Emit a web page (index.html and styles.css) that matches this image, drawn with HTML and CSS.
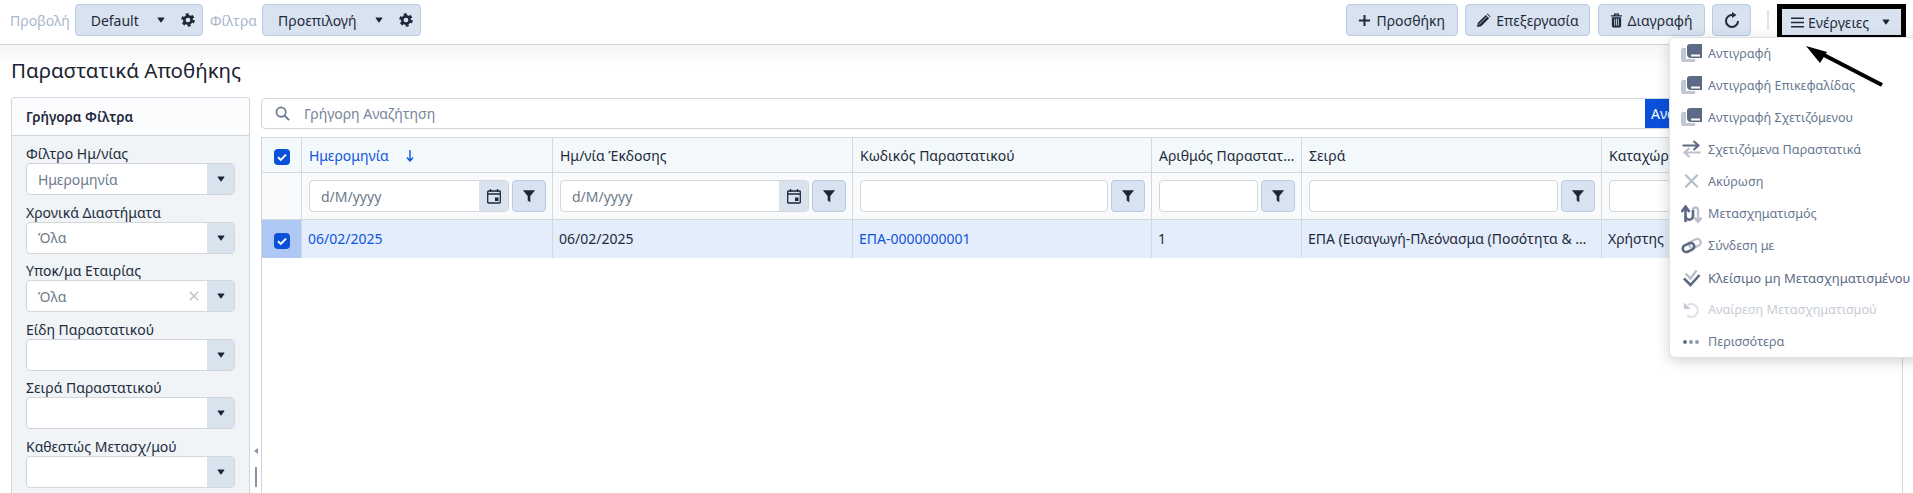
FILE: index.html
```html
<!DOCTYPE html>
<html lang="el">
<head>
<meta charset="utf-8">
<title>Παραστατικά Αποθήκης</title>
<link rel="stylesheet" href="styles.css">
</head>
<body>
<svg class="defs" width="0" height="0" aria-hidden="true">
  <defs>
    <symbol id="i-gear" viewBox="0 0 16 16">
      <circle cx="8" cy="8" r="4.200" fill="none" stroke="currentColor" stroke-width="3"/>
      <circle cx="8" cy="8" r="6.400" fill="none" stroke="currentColor" stroke-width="2.600" stroke-dasharray="3.400 3.300"/>
    </symbol>
    <symbol id="i-caret" viewBox="0 0 10 8">
      <path d="M1 .5h8a.6.6 0 0 1 .4 1L5.400 7.300a.6.6 0 0 1-.8 0L.6 1.500A.6.6 0 0 1 1 .5z" fill="currentColor"/>
    </symbol>
    <symbol id="i-funnel" viewBox="0 0 16 16">
      <path d="M1 1.500h14L9.500 8v7l-3-2V8z" fill="currentColor"/>
    </symbol>
    <symbol id="i-cal" viewBox="0 0 14 16">
      <path d="M1.500 3h11a.8.800 0 0 1 .8.800v10.400a.8.800 0 0 1-.8.800h-11a.8.800 0 0 1-.8-.8V3.800a.8.800 0 0 1 .8-.8z" fill="none" stroke="currentColor" stroke-width="1.300"/>
      <path d="M3.500 1v3M10.500 1v3M1 6h12" stroke="currentColor" stroke-width="1.300" fill="none"/>
      <rect x="8" y="9.500" width="3.500" height="3.500" fill="currentColor"/>
    </symbol>
    <symbol id="i-check" viewBox="0 0 16 16">
      <path d="M4 8.200l2.800 2.700L12 5.600" fill="none" stroke="#fff" stroke-width="2"/>
    </symbol>
    <symbol id="i-books" viewBox="0 0 21 18">
      <path d="M2 4h3v11h9v3H2a2 2 0 0 1-2-2V6a2 2 0 0 1 2-2z" fill="currentColor" opacity=".38"/>
      <path d="M9 0H21V14H10a4 4 0 0 1-4-4V3a3 3 0 0 1 3-3zM10 10.500h9v2h-9z" fill="currentColor" fill-rule="evenodd"/>
    </symbol>
    <symbol id="i-swap" viewBox="0 0 20 18">
      <path d="M1 5.500h16M12 1l5 4.500-5 4.500" fill="none" stroke="currentColor" stroke-width="2"/>
      <path d="M19 12.500H3M8 8l-5 4.500 5 4.500" fill="none" stroke="currentColor" stroke-width="2" opacity=".42"/>
    </symbol>
    <symbol id="i-x" viewBox="0 0 16 16">
      <path d="M2.500 2.500l11 11M13.500 2.500l-11 11" fill="none" stroke="currentColor" stroke-width="2"/>
    </symbol>
    <symbol id="i-transform" viewBox="0 0 21 18">
      <path d="M4.500 17V3M0.500 7L4.500 1.500 8.500 7" fill="none" stroke="currentColor" stroke-width="2.600"/>
      <path d="M4.500 11a3.750 3.750 0 0 0 7.500 0V5" fill="none" stroke="currentColor" stroke-width="2.600"/>
      <path d="M12 5a2.500 2.500 0 0 1 5 0v11M13.500 12.500L17 17l3.500-4.500" fill="none" stroke="currentColor" stroke-width="2.400" opacity=".42"/>
    </symbol>
    <symbol id="i-link" viewBox="0 0 21 18">
      <rect x="8" y="3" width="12" height="7" rx="3.500" transform="rotate(-25 14 6.500)" fill="none" stroke="currentColor" stroke-width="2.200" opacity=".42"/>
      <rect x="1.500" y="7" width="12" height="7" rx="3.500" transform="rotate(-25 7.500 10.500)" fill="none" stroke="currentColor" stroke-width="2.600"/>
    </symbol>
    <symbol id="i-closecheck" viewBox="0 0 18 18">
      <path d="M3 4.500l5 5 6-8" fill="none" stroke="currentColor" stroke-width="2.200" opacity=".45"/>
      <path d="M1.500 9.500L8 16 17 6" fill="none" stroke="currentColor" stroke-width="2.600"/>
    </symbol>
    <symbol id="i-undo" viewBox="0 0 20 20">
      <path d="M1.500 1.500l7.500 7.500H1.500z" fill="currentColor"/>
      <path d="M6 4.500a7.200 7.200 0 1 1 -1 11.500" fill="none" stroke="currentColor" stroke-width="2.400" opacity=".6"/>
    </symbol>
    <symbol id="i-dots" viewBox="0 0 21 18">
      <circle cx="4" cy="9" r="1.900" fill="currentColor"/>
      <circle cx="10" cy="9" r="1.900" fill="currentColor" opacity=".7"/>
      <circle cx="16" cy="9" r="1.900" fill="currentColor" opacity=".7"/>
    </symbol>
  </defs>
</svg>

<div class="app">
  <header class="topbar">
    <div class="bar-group">
      <span class="bar-label">Προβολή</span>
      <div class="view-btn view-default">
        <span class="view-name">Default</span>
        <svg class="caret"><use href="#i-caret"/></svg>
        <svg class="gear"><use href="#i-gear"/></svg>
      </div>
      <span class="bar-label bar-label-filter">Φίλτρα</span>
      <div class="view-btn view-filter">
        <span class="view-name">Προεπιλογή</span>
        <svg class="caret"><use href="#i-caret"/></svg>
        <svg class="gear"><use href="#i-gear"/></svg>
      </div>
    </div>
    <div class="bar-group bar-actions">
      <button class="tool-btn btn-add">
        <svg class="tool-ico" viewBox="0 0 14 14"><path d="M7 1v12M1 7h12" fill="none" stroke="currentColor" stroke-width="2.200"/></svg>
        Προσθήκη
      </button>
      <button class="tool-btn btn-edit">
        <svg class="tool-ico edit-ico" viewBox="0 0 16 16"><path d="M1 15l1-4.500 8.500-8.500 3.500 3.500L5.500 14zM11.500 1l.8-.500 3.200 3.200-.5.800z" fill="currentColor"/><path d="M3 12.500l9-9" stroke="#d9e3f0" stroke-width=".8"/></svg>
        Επεξεργασία
      </button>
      <button class="tool-btn btn-del">
        <svg class="tool-ico del-ico" viewBox="0 0 14 16"><path d="M1 3h12M5 3V1.200h4V3" fill="none" stroke="currentColor" stroke-width="1.400"/><path d="M2 4.500h10V14a1.500 1.500 0 0 1-1.500 1.500h-7A1.500 1.500 0 0 1 2 14z" fill="currentColor"/><path d="M5 6v7.500M7 6v7.500M9 6v7.500" stroke="#d9e3f0" stroke-width=".9"/></svg>
        Διαγραφή
      </button>
      <button class="tool-btn btn-refresh">
        <svg class="tool-ico refresh-ico" viewBox="0 0 16 16"><path d="M8.500 3A6 6 0 1 0 14 9" fill="none" stroke="currentColor" stroke-width="2"/><path d="M8 0v6l4.500-3z" fill="currentColor"/></svg>
      </button>
      <span class="bar-sep"></span>
      <button class="tool-btn btn-actions">
        <svg class="tool-ico" viewBox="0 0 14 12"><path d="M0 1.500h14M0 6h14M0 10.500h14" fill="none" stroke="currentColor" stroke-width="1.700"/></svg>
        Ενέργειες
        <svg class="caret caret-actions"><use href="#i-caret"/></svg>
      </button>
    </div>
  </header>

  <div class="content">
    <h1 class="page-title">Παραστατικά Αποθήκης</h1>
    <div class="workspace">
      <aside class="filters">
        <div class="filters-head">Γρήγορα Φίλτρα</div>
        <div class="filters-body">
          <div class="field">
            <label class="field-label">Φίλτρο Ημ/νίας</label>
            <div class="select"><span class="select-val">Ημερομηνία</span><span class="select-arrow"><svg class="caret"><use href="#i-caret"/></svg></span></div>
          </div>
          <div class="field">
            <label class="field-label">Χρονικά Διαστήματα</label>
            <div class="select"><span class="select-val">Όλα</span><span class="select-arrow"><svg class="caret"><use href="#i-caret"/></svg></span></div>
          </div>
          <div class="field">
            <label class="field-label">Υποκ/μα Εταιρίας</label>
            <div class="select"><span class="select-val">Όλα</span><svg class="select-clear"><use href="#i-x"/></svg><span class="select-arrow"><svg class="caret"><use href="#i-caret"/></svg></span></div>
          </div>
          <div class="field">
            <label class="field-label">Είδη Παραστατικού</label>
            <div class="select"><span class="select-val"></span><span class="select-arrow"><svg class="caret"><use href="#i-caret"/></svg></span></div>
          </div>
          <div class="field">
            <label class="field-label">Σειρά Παραστατικού</label>
            <div class="select"><span class="select-val"></span><span class="select-arrow"><svg class="caret"><use href="#i-caret"/></svg></span></div>
          </div>
          <div class="field">
            <label class="field-label">Καθεστώς Μετασχ/μού</label>
            <div class="select"><span class="select-val"></span><span class="select-arrow"><svg class="caret"><use href="#i-caret"/></svg></span></div>
          </div>
        </div>
      </aside>

      <div class="splitter">
        <span class="split-arrow"></span>
        <span class="split-bar"></span>
      </div>

      <main class="main">
        <div class="search">
          <svg class="search-ico" viewBox="0 0 16 16"><circle cx="6.500" cy="6.500" r="5" fill="none" stroke="currentColor" stroke-width="1.800"/><path d="M10.200 10.200L15 15" stroke="currentColor" stroke-width="2"/></svg>
          <span class="search-text">Γρήγορη Αναζήτηση</span>
          <span class="search-btn">Αναζήτηση</span>
        </div>
        <div class="grid">
          <table class="table">
            <colgroup>
              <col class="c0"><col class="c1"><col class="c2"><col class="c3"><col class="c4"><col class="c5"><col class="c6">
            </colgroup>
            <thead>
              <tr class="head-row">
                <th class="cb-cell"><span class="cb"><svg><use href="#i-check"/></svg></span></th>
                <th class="th-sorted">Ημερομηνία<svg class="sort-ico" viewBox="0 0 8 12"><path d="M4 0v10.500M1 7.500L4 11l3-3.500" fill="none" stroke="currentColor" stroke-width="1.400"/></svg></th>
                <th>Ημ/νία Έκδοσης</th>
                <th>Κωδικός Παραστατικού</th>
                <th>Αριθμός Παραστατικού</th>
                <th>Σειρά</th>
                <th>Καταχώρηση από</th>
              </tr>
              <tr class="filter-row">
                <td class="cb-cell"></td>
                <td><div class="cf"><div class="cf-input"><span class="cf-text">d/M/yyyy</span><span class="cf-cal"><svg><use href="#i-cal"/></svg></span></div><span class="cf-btn"><svg><use href="#i-funnel"/></svg></span></div></td>
                <td><div class="cf"><div class="cf-input"><span class="cf-text">d/M/yyyy</span><span class="cf-cal"><svg><use href="#i-cal"/></svg></span></div><span class="cf-btn"><svg><use href="#i-funnel"/></svg></span></div></td>
                <td><div class="cf"><div class="cf-input"></div><span class="cf-btn"><svg><use href="#i-funnel"/></svg></span></div></td>
                <td><div class="cf"><div class="cf-input"></div><span class="cf-btn"><svg><use href="#i-funnel"/></svg></span></div></td>
                <td><div class="cf"><div class="cf-input"></div><span class="cf-btn"><svg><use href="#i-funnel"/></svg></span></div></td>
                <td><div class="cf"><div class="cf-input"></div><span class="cf-btn"><svg><use href="#i-funnel"/></svg></span></div></td>
              </tr>
            </thead>
            <tbody>
              <tr class="data-row">
                <td class="cb-cell cb-cell-on"><span class="cb"><svg><use href="#i-check"/></svg></span></td>
                <td class="link">06/02/2025</td>
                <td>06/02/2025</td>
                <td class="link">ΕΠΑ-0000000001</td>
                <td>1</td>
                <td>ΕΠΑ (Εισαγωγή-Πλεόνασμα (Ποσότητα &amp; Αξία))</td>
                <td>Χρήστης</td>
              </tr>
            </tbody>
          </table>
        </div>
      </main>
    </div>
  </div>

  <ul class="menu">
    <li class="menu-item"><svg class="menu-ico"><use href="#i-books"/></svg>Αντιγραφή</li>
    <li class="menu-item"><svg class="menu-ico"><use href="#i-books"/></svg>Αντιγραφή Επικεφαλίδας</li>
    <li class="menu-item"><svg class="menu-ico"><use href="#i-books"/></svg>Αντιγραφή Σχετιζόμενου</li>
    <li class="menu-item"><svg class="menu-ico"><use href="#i-swap"/></svg>Σχετιζόμενα Παραστατικά</li>
    <li class="menu-item"><svg class="menu-ico menu-ico-x"><use href="#i-x"/></svg>Ακύρωση</li>
    <li class="menu-item"><svg class="menu-ico"><use href="#i-transform"/></svg>Μετασχηματισμός</li>
    <li class="menu-item"><svg class="menu-ico"><use href="#i-link"/></svg>Σύνδεση με</li>
    <li class="menu-item menu-item-strong"><svg class="menu-ico"><use href="#i-closecheck"/></svg>Κλείσιμο μη Μετασχηματισμένου</li>
    <li class="menu-item menu-item-off"><svg class="menu-ico"><use href="#i-undo"/></svg>Αναίρεση Μετασχηματισμού</li>
    <li class="menu-item"><svg class="menu-ico"><use href="#i-dots"/></svg>Περισσότερα</li>
  </ul>

  <svg class="pointer" viewBox="0 0 90 50" aria-hidden="true">
    <path d="M76 39L16 8" stroke="#000" stroke-width="4" fill="none"/>
    <path d="M0 0L14 17 21 6z" fill="#000"/>
  </svg>
</div>
</body>
</html>
```

FILE: styles.css
```css
* { box-sizing: border-box; }
html, body { margin: 0; height: 100%; overflow: hidden; background: #fff; }
body { font-family: "Noto Sans", sans-serif; font-size: 14px; color: #1f2a3c; }
.defs { position: absolute; }

.app { position: relative; height: 100vh; display: flex; flex-direction: column; overflow: hidden; }

/* top toolbar */
.topbar { flex: none; height: 45px; border-bottom: 1px solid #d4d7da; display: flex; justify-content: space-between; align-items: flex-start; padding: 4px 12px 0 10px; background: #fff; }
.bar-group { display: flex; align-items: center; height: 32px; }
.bar-label { color: #a8b8cb; font-size: 14px; }
.bar-label-filter { margin-left: 7px; }
.view-btn { height: 32px; display: flex; align-items: center; background: #d9e3f0; border: 1px solid #b7cbe6; border-radius: 4px; margin-left: 5px; }
.view-default { width: 128px; padding-left: 15px; }
.view-filter { width: 159px; padding-left: 15px; }
.view-name { flex: 1; }
.caret { width: 8px; height: 6px; color: #1b2738; flex: none; }
.gear { width: 14px; height: 14px; color: #1b2738; margin: 0 7px 0 16px; flex: none; }

.bar-actions { gap: 7.500px; }
.tool-btn { font: inherit; color: #1f2a3c; height: 32px; background: #d9e3f0; border: 1px solid #b7cbe6; border-radius: 4px; display: flex; align-items: center; justify-content: center; gap: 5px; padding: 0; white-space: nowrap; }
.tool-ico { width: 13px; height: 13px; flex: none; }
.edit-ico { width: 15px; height: 15px; }
.del-ico { width: 13px; height: 15px; }
.btn-add { width: 111.500px; }
.btn-edit { width: 125px; }
.btn-del { width: 107px; }
.btn-refresh { width: 39px; }
.refresh-ico { width: 16px; height: 16px; }
.bar-sep { width: 2px; height: 20px; background: #e1e5ea; margin: 0 6px 0 8px; }
.btn-actions { width: 119px; height: 26px; align-self: flex-start; margin-top: 5px; padding-right: 2px; outline: 5px solid #000; border: 0; border-radius: 0; gap: 4px; }
.caret-actions { margin-left: 9px; }

/* content */
.content { flex: 1; min-height: 0; display: flex; flex-direction: column; padding: 0 10px 0 11px; background: linear-gradient(#f5f6f7, #fff 22px); }
.page-title { margin: 0; height: 52px; padding-top: 7px; font-size: 20.500px; line-height: 36px; font-weight: 400; color: #1c2433; }
.workspace { flex: 1; min-height: 0; display: flex; }

/* quick filters */
.filters { width: 239px; flex: none; border: 1px solid #d2d6da; border-bottom: 0; border-radius: 4px 4px 0 0; background: #f0f4f6; overflow: hidden; }
.filters-head { height: 38px; padding: 0 14px; line-height: 39px; font-weight: 600; font-size: 13.500px; background: #fbfcfe; border-bottom: 1px solid #d2d6da; }
.filters-body { padding: 7px 14px 0; }
.field { height: 58.600px; }
.field-label { display: block; height: 20px; line-height: 22px; font-size: 14px; color: #222c3e; }
.select { height: 32px; display: flex; align-items: center; background: #fff; border: 1px solid #d3d7dc; border-radius: 4px; overflow: hidden; }
.select-val { flex: 1; padding-left: 11px; color: #6d7a8d; }
.select-clear { width: 12px; height: 12px; color: #c3c7cc; margin-right: 7px; }
.select-arrow { width: 27px; height: 100%; background: #d9e3ee; display: flex; align-items: center; justify-content: center; }

.splitter { width: 11px; flex: none; display: flex; flex-direction: column; align-items: center; justify-content: flex-end; padding-bottom: 6px; gap: 13px; }
.split-arrow { width: 0; height: 0; border: 3px solid transparent; border-right: 4px solid #8a95a8; border-left: 0; }
.split-bar { width: 2px; height: 20px; background: #8a95ab; }

/* main */
.main { flex: 1; min-width: 0; display: flex; flex-direction: column; }
.search { flex: none; height: 31px; margin: 1px 0 8px; display: flex; align-items: center; background: #fff; border: 1px solid #d2d6da; border-radius: 4px; overflow: hidden; }
.search-ico { width: 15px; height: 15px; color: #67778c; margin-left: 13px; }
.search-text { margin-left: 14px; color: #77859a; flex: 1; }
.search-btn { width: 257px; height: 100%; padding-left: 6px; line-height: 29px; background: #0b50db; color: #fff; }

.grid { flex: 1; min-height: 0; border: 1px solid #d2d6da; border-width: 0 1px; overflow: hidden; }
.table { width: 1640px; table-layout: fixed; border-collapse: separate; border-spacing: 0; border-top: 1px solid #d5d8dc; }
.c0 { width: 40px; }
.c1 { width: 251px; }
.c2 { width: 300px; }
.c3 { width: 299px; }
.c4 { width: 150px; }
.c5 { width: 300px; }
.c6 { width: 300px; }
.table th, .table td { border-right: 1px solid #d5d8dc; padding: 0 6px; overflow: hidden; white-space: nowrap; text-overflow: ellipsis; font-weight: 400; text-align: left; font-size: 14px; }
.head-row th { height: 35px; background: #f3f8fb; border-bottom: 1px solid #d5d8dc; padding-left: 7px; }
.th-sorted { color: #0f55dd; }
.sort-ico { width: 8px; height: 12px; margin-left: 17px; vertical-align: -1px; }
.table .filter-row td { height: 47px; background: #f8fafc; border-bottom: 1px solid #d5d8dc; padding-left: 7px; }
.table .data-row td { height: 38px; background: #e3edfb; padding-bottom: 1px; }
.table .cb-cell { padding: 0; text-align: center; }
.table .data-row .cb-cell-on { background: #aec7f3; padding: 0; }
.cb { display: inline-block; width: 16px; height: 16px; background: #0b50db; border-radius: 4px; vertical-align: middle; }
.cb svg { display: block; width: 16px; height: 16px; }
.table .link { color: #0f55dd; }

.cf { display: flex; align-items: center; gap: 3px; }
.cf-input { flex: 1; min-width: 0; height: 32px; display: flex; align-items: center; background: #fff; border: 1px solid #d3d7dc; border-radius: 4px; overflow: hidden; }
.cf-text { flex: 1; padding-left: 11px; color: #6d7a8d; }
.cf-cal { width: 29px; height: 100%; background: #d9e3ee; display: flex; align-items: center; justify-content: center; color: #1b2738; }
.cf-cal svg { width: 14px; height: 16px; }
.cf-btn { width: 34px; height: 32px; flex: none; background: #d9e3f0; border: 1px solid #b7cbe6; border-radius: 4px; display: flex; align-items: center; justify-content: center; color: #1b2738; }
.cf-btn svg { width: 14px; height: 14px; }

/* actions menu */
.menu { position: absolute; left: 1669px; top: 37px; width: 260px; height: 321px; margin: 0; padding: 0; list-style: none; background: #fff; border: 1px solid #dfe2e6; border-radius: 6px; box-shadow: 0 3px 14px rgba(0, 0, 0, .18); }
.menu-item { height: 32.100px; padding-bottom: 2px; display: flex; align-items: center; font-size: 12.600px; color: #68788f; white-space: nowrap; }
.menu-ico { width: 21px; height: 18px; margin: 0 6px 0 11px; color: #5c6a85; flex: none; }
.menu-ico-x { color: #b6bec9; }
.menu-item-strong { font-size: 13px; letter-spacing: .01px; color: #5c6a85; }
.menu-item-off { color: #c6ccd6; }
.menu-item-off .menu-ico { color: #c6ccd6; }

.pointer { position: absolute; left: 1806px; top: 46px; width: 90px; height: 50px; }
```
